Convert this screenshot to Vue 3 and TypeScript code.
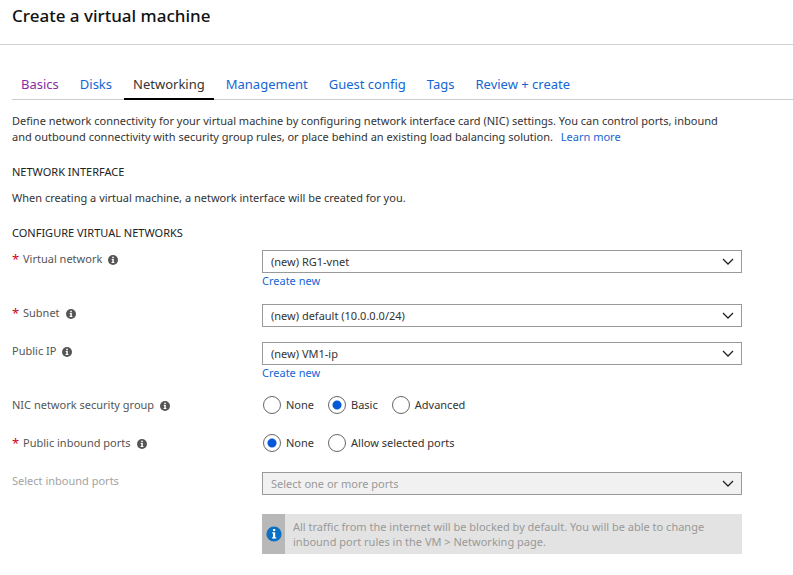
<script setup lang="ts">
import { ref } from 'vue'

interface Tab {
  label: string
  state?: 'visited' | 'active'
}

interface Field {
  id: string
  label: string
  kind: 'select' | 'radio'
  options: string[]
  required?: boolean
  info?: boolean
  disabled?: boolean
  createNew?: boolean
}

const tabs: Tab[] = [
  { label: 'Basics', state: 'visited' },
  { label: 'Disks' },
  { label: 'Networking', state: 'active' },
  { label: 'Management' },
  { label: 'Guest config' },
  { label: 'Tags' },
  { label: 'Review + create' },
]

const fields: Field[] = [
  { id: 'vnet', label: 'Virtual network', kind: 'select', options: ['(new) RG1-vnet'], required: true, info: true, createNew: true },
  { id: 'subnet', label: 'Subnet', kind: 'select', options: ['(new) default (10.0.0.0/24)'], required: true, info: true },
  { id: 'public-ip', label: 'Public IP', kind: 'select', options: ['(new) VM1-ip'], info: true, createNew: true },
  { id: 'nsg', label: 'NIC network security group', kind: 'radio', options: ['None', 'Basic', 'Advanced'], info: true },
  { id: 'inbound', label: 'Public inbound ports', kind: 'radio', options: ['None', 'Allow selected ports'], required: true, info: true },
  { id: 'ports', label: 'Select inbound ports', kind: 'select', options: ['Select one or more ports'], disabled: true },
]

const values = ref<Record<string, string>>({
  vnet: '(new) RG1-vnet',
  subnet: '(new) default (10.0.0.0/24)',
  'public-ip': '(new) VM1-ip',
  nsg: 'Basic',
  inbound: 'None',
  ports: 'Select one or more ports',
})
</script>

<template>
  <div class="blade">
    <header class="title-bar">
      <h1>Create a virtual machine</h1>
    </header>

    <nav class="tabs">
      <a v-for="tab in tabs" :key="tab.label" href="#" class="tab" :class="tab.state">{{ tab.label }}</a>
    </nav>

    <main class="content">
      <p class="intro">
        Define network connectivity for your virtual machine by configuring network interface card (NIC) settings. You
        can control ports, inbound and outbound connectivity with security group rules, or place behind an existing
        load balancing solution. <a href="#" class="learn">Learn more</a>
      </p>

      <h2>NETWORK INTERFACE</h2>
      <p class="note">When creating a virtual machine, a network interface will be created for you.</p>

      <h2>CONFIGURE VIRTUAL NETWORKS</h2>
      <form class="form" @submit.prevent>
        <div v-for="field in fields" :key="field.id" class="row">
          <div class="caption" :class="{ disabled: field.disabled }">
            <span v-if="field.required" class="star">*</span>
            <label v-if="field.kind === 'select'" :for="field.id">{{ field.label }}</label>
            <span v-else :id="field.id + '-label'">{{ field.label }}</span>
            <svg v-if="field.info" class="info" viewBox="0 0 10 10" aria-hidden="true">
              <circle cx="5" cy="5" r="5" fill="#555" />
              <path d="M4.2 1.7h1.6v1.5H4.2zM3.7 4h2.1v3h.6v1.1H3.6V7h.7V5h-.6z" fill="#fff" />
            </svg>
          </div>

          <div v-if="field.kind === 'select'" class="control">
            <div class="picker">
              <select :id="field.id" v-model="values[field.id]" :disabled="field.disabled">
                <option v-for="option in field.options" :key="option" :value="option">{{ option }}</option>
              </select>
              <svg class="chevron" viewBox="0 0 12 7" aria-hidden="true">
                <path d="M1 1 6 6 11 1" fill="none" stroke="#222" stroke-width="1.3" />
              </svg>
            </div>
            <a v-if="field.createNew" href="#" class="create">Create new</a>
          </div>

          <div v-else class="control radios" role="radiogroup" :aria-labelledby="field.id + '-label'">
            <label v-for="option in field.options" :key="option" class="choice">
              <input v-model="values[field.id]" type="radio" :name="field.id" :value="option" />
              <span>{{ option }}</span>
            </label>
          </div>
        </div>

        <div class="notice">
          <div class="badge">
            <svg viewBox="0 0 16 16" aria-hidden="true">
              <circle cx="8" cy="8" r="7.6" fill="#0a70c4" />
              <path d="M7 3h2.2v2.1H7zM6.2 6.3h3v5h1v1.3H6.1v-1.3H7V7.5h-.8z" fill="#fff" />
            </svg>
          </div>
          <p>
            All traffic from the internet will be blocked by default. You will be able to change inbound port rules in
            the VM &gt; Networking page.
          </p>
        </div>
      </form>
    </main>
  </div>
</template>

<style>
body {
  margin: 0;
  background: #fff;
}
</style>

<style scoped>
.blade {
  font-family: "Noto Sans", "Open Sans", sans-serif;
  font-size: 11px;
  line-height: 16px;
  color: #333;
}

h1,
h2,
p {
  margin: 0;
  font-weight: 400;
}

a {
  color: #1466d4;
  text-decoration: none;
}

.title-bar {
  padding: 4px 12px 16px;
  border-bottom: 1px solid #d2d2d2;
}

h1 {
  font-size: 17px;
  line-height: 24px;
  font-weight: 500;
  color: #111;
}

.tabs {
  display: flex;
  gap: 3px;
  margin: 27px 0 0 12px;
  border-bottom: 1px solid #ccc;
}

.tab {
  padding: 0 9px 2px;
  margin-bottom: -1px;
  font-size: 13px;
  line-height: 24px;
  white-space: nowrap;
  border-bottom: 2px solid transparent;
}

.tab.visited {
  color: #8a2da5;
}

.tab.active {
  color: #333;
  border-bottom-color: #000;
}

.content {
  padding: 13px 51px 20px 12px;
}

.intro {
  padding-right: 8px;
}

.learn {
  margin-left: 5px;
}

h2 {
  margin-top: 19px;
  font-size: 11px;
  line-height: 16px;
  color: #222;
}

.note {
  margin-top: 10px;
}

.form {
  display: flex;
  flex-direction: column;
  gap: 15px;
  margin-top: 9px;
}

.row {
  display: grid;
  grid-template-columns: 250px minmax(0, 1fr);
  min-height: 23px;
}

.caption {
  display: flex;
  align-items: center;
  align-self: start;
  height: 18px;
  color: #555;
}

.caption.disabled {
  color: #a3a3a3;
}

.star {
  width: 11px;
  font-size: 13px;
  color: #d0021b;
}

.info {
  width: 10px;
  height: 10px;
  margin: 2px 0 0 6px;
}

.control {
  display: flex;
  flex-direction: column;
}

.picker {
  display: grid;
  align-items: center;
}

.picker > * {
  grid-area: 1 / 1;
}

select {
  appearance: none;
  width: 100%;
  height: 23px;
  padding: 0 28px 0 8px;
  border: 1px solid #999;
  border-radius: 0;
  background: #fff;
  font: inherit;
  color: #333;
}

select:disabled {
  background: #f1f1f1;
  color: #999;
  opacity: 1;
}

.chevron {
  justify-self: end;
  width: 12px;
  height: 7px;
  margin-right: 8px;
  pointer-events: none;
}

.create {
  align-self: start;
  line-height: 16px;
}

.radios {
  flex-direction: row;
  align-items: flex-start;
  gap: 13px;
}

.choice {
  display: flex;
  align-items: center;
  gap: 5px;
}

.choice input {
  appearance: none;
  box-sizing: border-box;
  width: 18px;
  height: 18px;
  margin: 0 0 0 1px;
  border: 1px solid #666;
  border-radius: 50%;
  background: #fff;
}

.choice input:checked {
  background: radial-gradient(circle, #0459d9 0 4px, #fff 5px);
}

.notice {
  display: flex;
  margin: 4px 0 0 250px;
  background: #e3e3e3;
  color: #999;
}

.badge {
  display: flex;
  flex: none;
  align-items: center;
  justify-content: center;
  width: 23px;
  background: #b8b8b8;
}

.badge svg {
  width: 16px;
  height: 16px;
}

.notice p {
  padding: 5px 8px;
  line-height: 15px;
}
</style>
